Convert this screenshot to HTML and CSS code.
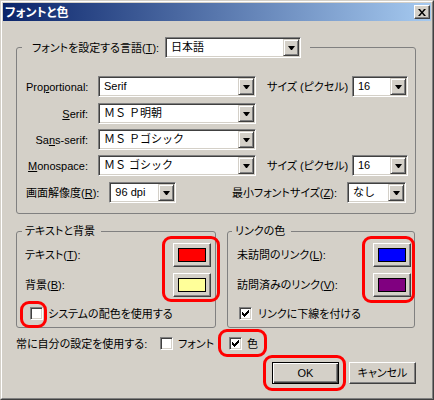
FILE: index.html
```html
<!DOCTYPE html>
<html lang="ja">
<head>
<meta charset="utf-8">
<link rel="stylesheet" href="styles.css">
</head>
<body>
<div class="window">
  <div class="frame">
    <div class="titlebar">
      <span class="title">フォントと色</span>
      <span class="close"><svg width="8" height="7" viewBox="0 0 8 7"><path d="M0 0h2l2 2.5L6 0h2L5 3.5 8 7H6L4 4.5 2 7H0l3-3.5z" fill="#000"/></svg></span>
    </div>
    <div class="body">
      <fieldset class="group fonts">
        <legend class="lang">
          <span class="lang-label">フォントを設定する言語(<u>T</u>):</span>
          <span class="select w-lang"><span class="val">日本語</span><span class="drop"></span></span>
        </legend>
        <div class="frows">
          <div class="frow">
            <span class="flabel">Pro<u>p</u>ortional:</span>
            <span class="select fsel"><span class="val">Serif</span><span class="drop"></span></span>
            <span class="slabel">サイズ (ピクセル)</span>
            <span class="select ssel"><span class="val">16</span><span class="drop"></span></span>
          </div>
          <div class="frow">
            <span class="flabel"><u>S</u>erif:</span>
            <span class="select fsel"><span class="val">ＭＳ Ｐ明朝</span><span class="drop"></span></span>
          </div>
          <div class="frow">
            <span class="flabel">Sa<u>n</u>s-serif:</span>
            <span class="select fsel"><span class="val">ＭＳ Ｐゴシック</span><span class="drop"></span></span>
          </div>
          <div class="frow">
            <span class="flabel"><u>M</u>onospace:</span>
            <span class="select fsel"><span class="val">ＭＳ ゴシック</span><span class="drop"></span></span>
            <span class="slabel">サイズ (ピクセル)</span>
            <span class="select ssel"><span class="val">16</span><span class="drop"></span></span>
          </div>
          <div class="frow last">
            <span>画面解像度(<u>R</u>):</span>
            <span class="select dpisel"><span class="val">96 dpi</span><span class="drop"></span></span>
            <span class="minlabel">最小フォントサイズ(<u>Z</u>):</span>
            <span class="select minsel"><span class="val">なし</span><span class="drop"></span></span>
          </div>
        </div>
      </fieldset>

      <div class="colors">
        <fieldset class="group textbg">
          <legend>テキストと背景</legend>
          <div class="crow first">
            <span>テキスト(<u>T</u>):</span>
            <span class="btn cbtn"><span class="swatch sw-red"></span></span>
          </div>
          <div class="crow">
            <span>背景(<u>B</u>):</span>
            <span class="btn cbtn"><span class="swatch sw-yellow"></span></span>
          </div>
          <div class="chkrow">
            <span class="check"></span>
            <span class="chklabel">システムの配色を使用する</span>
          </div>
        </fieldset>
        <fieldset class="group links">
          <legend>リンクの色</legend>
          <div class="crow first">
            <span>未訪問のリンク(<u>L</u>):</span>
            <span class="btn cbtn"><span class="swatch sw-blue"></span></span>
          </div>
          <div class="crow">
            <span>訪問済みのリンク(<u>V</u>):</span>
            <span class="btn cbtn"><span class="swatch sw-purple"></span></span>
          </div>
          <div class="chkrow">
            <span class="check on"><svg width="7" height="7" viewBox="0 0 7 7" shape-rendering="crispEdges"><path d="M6 0h1v3h-1v1h-1v1h-1v1h-1v1h-1v-1h-1v-1h-1v-3h1v1h1v1h1v-1h1v-1h1z" fill="#000"/></svg></span>
            <span class="chklabel">リンクに下線を付ける</span>
          </div>
        </fieldset>
      </div>

      <div class="always">
        <span class="always-label">常に自分の設定を使用する:</span>
        <span class="cbitem fontitem"><span class="check"></span><span class="chklabel">フォント</span></span>
        <span class="cbitem"><span class="check on"><svg width="7" height="7" viewBox="0 0 7 7" shape-rendering="crispEdges"><path d="M6 0h1v3h-1v1h-1v1h-1v1h-1v1h-1v-1h-1v-1h-1v-3h1v1h1v1h1v-1h1v-1h1z" fill="#000"/></svg></span><span class="chklabel">色</span></span>
      </div>

      <div class="buttons">
        <span class="btn pbtn default">OK</span>
        <span class="btn pbtn">キャンセル</span>
      </div>
    </div>
  </div>
  <div class="hl hl-text"></div>
  <div class="hl hl-sys"></div>
  <div class="hl hl-link"></div>
  <div class="hl hl-color"></div>
  <div class="hl hl-ok"></div>
</div>
</body>
</html>
```

FILE: styles.css
```css
* { box-sizing: border-box; }

body {
  margin: 0;
  background: #d4d0c8;
  font-family: "Liberation Sans", "Noto Sans CJK JP", sans-serif;
  font-size: 11px;
  line-height: 14px;
  color: #000;
  font-feature-settings: "palt";
}

u { text-decoration: underline; text-underline-offset: 1px; }

.window {
  position: relative;
  width: 434px;
  height: 400px;
  border: 1px solid;
  border-color: #d4d0c8 #404040 #404040 #d4d0c8;
  background: #d4d0c8;
}

.frame {
  height: 100%;
  border: 1px solid;
  border-color: #fff #808080 #808080 #fff;
  padding: 1px;
}

.titlebar {
  height: 18px;
  display: flex;
  align-items: center;
  justify-content: space-between;
  padding: 0 1px 0 2px;
  background: linear-gradient(to right, #0a246a, #a6caf0);
  color: #fff;
}

.title {
  font-family: "Noto Sans CJK JP", sans-serif;
  font-weight: bold;
  font-size: 12px;
  line-height: 18px;
}

.close {
  width: 16px;
  height: 14px;
  display: flex;
  align-items: center;
  justify-content: center;
  background: #d4d0c8;
  border: 1px solid;
  border-color: #fff #404040 #404040 #fff;
  box-shadow: inset -1px -1px #808080;
}

.body {
  padding: 16px 15px 0 13px;
}

/* group boxes */
fieldset.group {
  margin: 0;
  border: 1px solid #808080;
  border-radius: 3px;
  min-width: 0;
}

fieldset.group legend {
  padding: 0 6px 0 3px;
  line-height: 14px;
  height: 14px;
}

.fonts {
  width: 400px;
  height: 177px;
  padding: 0 0 0 9px;
}

.fonts legend.lang {
  display: flex;
  align-items: center;
  height: 21px;
  margin-left: -4px;
  padding: 0 9px 0 10px;
}

.lang-label { width: 123px; white-space: nowrap; }

/* select boxes */
.select {
  display: flex;
  height: 21px;
  padding: 1px;
  background: #fff;
  border: 1px solid;
  border-color: #808080 #fff #fff #808080;
  box-shadow: inset 1px 1px #404040, inset -1px -1px #d4d0c8;
}

.select .val {
  flex: 1;
  padding-left: 4px;
  line-height: 17px;
  white-space: nowrap;
  overflow: hidden;
  font-feature-settings: normal;
}

.select .drop {
  position: relative;
  width: 16px;
  height: 17px;
  background: #d4d0c8;
  border: 1px solid;
  border-color: #d4d0c8 #404040 #404040 #d4d0c8;
  box-shadow: inset 1px 1px #fff, inset -1px -1px #808080;
  display: flex;
  align-items: center;
  justify-content: center;
}

.select .drop::after {
  content: "";
  width: 1px;
  height: 0;
  border-top: 4px solid #000;
  border-left: 3px solid transparent;
  border-right: 3px solid transparent;
  margin-top: 1px;
}

.w-lang { width: 136px; margin-left: 10px; }

.frows { margin-top: 18px; }

.frow {
  display: flex;
  align-items: center;
  height: 21px;
  margin-bottom: 5px;
}

.frow:first-child { margin-bottom: 6px; }
.frow:nth-child(4) { margin-bottom: 6px; }

.flabel { width: 62px; text-align: right; white-space: nowrap; }
.fsel { width: 158px; margin-left: 10px; }
.slabel { width: 78px; margin-left: 11px; white-space: nowrap; }
.ssel { width: 56px; margin-left: 7px; }

.frow.last { padding-right: 9px; }
.dpisel { width: 67px; margin-left: 10px; }
.minlabel { margin-left: auto; }
.minsel { width: 59px; margin-left: 10px; }

/* color groups */
.colors {
  display: flex;
  gap: 11px;
  margin-top: 10px;
}

.textbg {
  width: 200px;
  height: 104px;
  padding: 0 4px 0 8px;
}
.textbg legend { margin-left: -3px; }

.links {
  width: 188px;
  height: 104px;
  padding: 0 3px 0 9px;
}
.links legend { margin-left: -5px; }

.crow {
  display: flex;
  align-items: center;
  justify-content: space-between;
  height: 24px;
  margin-top: 6px;
}
.crow.first { margin-top: 5px; }

.btn {
  display: flex;
  align-items: center;
  justify-content: center;
  background: #d4d0c8;
  border: 1px solid;
  border-color: #fff #404040 #404040 #fff;
  box-shadow: inset -1px -1px #808080;
}

.cbtn { width: 38px; height: 24px; }

.swatch {
  width: 28px;
  height: 14px;
  border: 1px solid #000;
}
.sw-red { background: #ff0000; }
.sw-yellow { background: #ffff99; }
.sw-blue { background: #0000ff; }
.sw-purple { background: #800080; }

.check {
  flex: none;
  width: 13px;
  height: 13px;
  display: flex;
  align-items: center;
  justify-content: center;
  background: #fff;
  border: 1px solid;
  border-color: #808080 #fff #fff #808080;
  box-shadow: inset 1px 1px #404040, inset -1px -1px #d4d0c8;
}

.chkrow {
  display: flex;
  align-items: center;
  height: 13px;
  margin-top: 10px;
}
.textbg .chkrow .check { margin-left: 5px; }
.textbg .chkrow .chklabel { margin-left: 5px; }
.links .chkrow .check { margin-left: 2px; }
.links .chkrow .chklabel { margin-left: 6px; }

/* bottom */
.always {
  display: flex;
  align-items: center;
  height: 13px;
  margin-top: 9px;
}
.always-label { width: 144px; white-space: nowrap; }
.cbitem { display: flex; align-items: center; }
.cbitem .chklabel { margin-left: 5px; }
.fontitem { width: 69px; }

.buttons {
  display: flex;
  justify-content: flex-end;
  gap: 10px;
  margin-top: 12px;
}

.pbtn { width: 67px; height: 22px; }

.pbtn.default {
  border: 1px solid #000;
  box-shadow: inset 1px 1px #fff, inset -1px -1px #404040, inset -2px -2px #808080;
}

/* red highlight markers */
.hl {
  position: absolute;
  border: 3px solid #ff0000;
  border-radius: 9px;
}
.hl-text { left: 161px; top: 235px; width: 58px; height: 66px; }
.hl-sys { left: 19px; top: 300px; width: 27px; height: 27px; }
.hl-link { left: 361px; top: 235px; width: 53px; height: 67px; }
.hl-color { left: 217px; top: 328px; width: 49px; height: 28px; }
.hl-ok { left: 262px; top: 354px; width: 83px; height: 36px; }
```
